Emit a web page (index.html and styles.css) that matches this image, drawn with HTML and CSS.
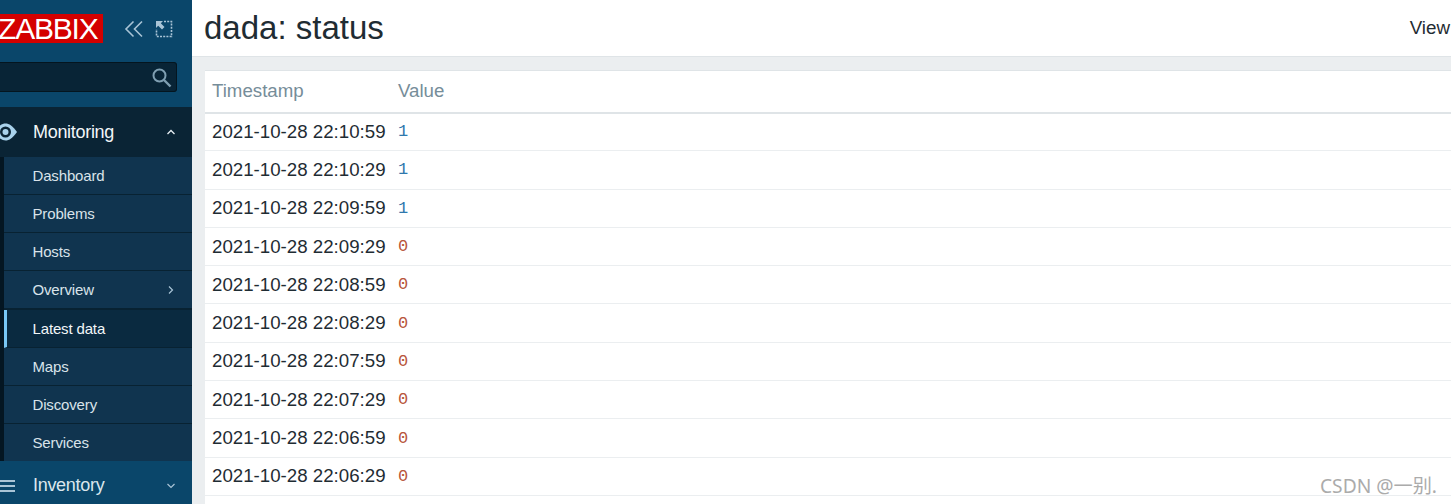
FILE: index.html
```html
<!DOCTYPE html>
<html lang="en">

<head>
    <meta charset="UTF-8">
    <title>dada: status</title>
    <link rel="stylesheet" href="styles.css">
</head>

<body>
    <div class="page">
        <div class="sidebar">
            <div class="brand">
                <div class="logo">ZABBIX</div>
                <svg class="brand-icon" width="20" height="18" viewBox="0 0 20 18">
                    <path d="M9.500 1.500 2 9l7.500 7.500M18 1.500 10.500 9l7.500 7.500" fill="none" stroke="#a9c4d6" stroke-width="1.600"/>
                </svg>
                <svg class="brand-icon expand" width="18" height="18" viewBox="0 0 18 18">
                    <path d="M9 1.500h7.500v15h-15V9" fill="none" stroke="#a9c4d6" stroke-width="1.600" stroke-dasharray="2 1.200"/>
                    <path d="M1 1h7L5.800 3.200 9.500 7 7 9.500 3.200 5.800 1 8z" fill="#a9c4d6"/>
                </svg>
            </div>
            <div class="search">
                <svg width="21" height="21" viewBox="0 0 21 21">
                    <circle cx="8.500" cy="8.500" r="6" fill="none" stroke="#7f9fb2" stroke-width="2"/>
                    <path d="m13 13 6.500 6.500" stroke="#7f9fb2" stroke-width="2.400"/>
                </svg>
            </div>
            <div class="menu-head open">
                <svg class="menu-icon" width="24" height="18" viewBox="0 0 24 18">
                    <path d="M0 9C4 3 8 .5 11.500 .5S19 3 23 9c-4 6-8 8.500-11.500 8.500S4 15 0 9z" fill="#a9d2ec"/>
                    <circle cx="11.500" cy="9" r="5.500" fill="#0a2435"/>
                    <circle cx="11.500" cy="9" r="3" fill="#a9d2ec"/>
                </svg>
                <span class="menu-label">Monitoring</span>
                <svg class="chev" width="10" height="6" viewBox="0 0 10 6"><path d="m1.500 5 3.500-3.500L8.500 5" fill="none" stroke="#e6eef3" stroke-width="1.300"/></svg>
            </div>
            <ul class="submenu">
                <li>Dashboard</li>
                <li>Problems</li>
                <li>Hosts</li>
                <li class="has-sub">Overview <svg width="6" height="10" viewBox="0 0 6 10"><path d="m1 1.500 3.500 3.500L1 8.500" fill="none" stroke="#a9c4d6" stroke-width="1.200"/></svg></li>
                <li class="selected">Latest data</li>
                <li>Maps</li>
                <li>Discovery</li>
                <li>Services</li>
            </ul>
            <div class="menu-head closed">
                <svg class="menu-icon" width="24" height="14" viewBox="0 0 24 14">
                    <path d="M0 2h21M0 7h21M0 12h21" stroke="#a9c4d6" stroke-width="2.200"/>
                </svg>
                <span class="menu-label">Inventory</span>
                <svg class="chev" width="10" height="6" viewBox="0 0 10 6"><path d="m1.500 1 3.500 3.500L8.500 1" fill="none" stroke="#a9c4d6" stroke-width="1.200"/></svg>
            </div>
        </div>

        <div class="main">
            <div class="header">
                <h1>dada: status</h1>
                <span class="view">View</span>
            </div>
            <div class="content">
                <table class="history">
                    <thead>
                        <tr><th class="col-time">Timestamp</th><th>Value</th></tr>
                    </thead>
                    <tbody>
                        <tr><td class="col-time">2021-10-28 22:10:59</td><td class="val up">1</td></tr>
                        <tr><td class="col-time">2021-10-28 22:10:29</td><td class="val up">1</td></tr>
                        <tr><td class="col-time">2021-10-28 22:09:59</td><td class="val up">1</td></tr>
                        <tr><td class="col-time">2021-10-28 22:09:29</td><td class="val down">0</td></tr>
                        <tr><td class="col-time">2021-10-28 22:08:59</td><td class="val down">0</td></tr>
                        <tr><td class="col-time">2021-10-28 22:08:29</td><td class="val down">0</td></tr>
                        <tr><td class="col-time">2021-10-28 22:07:59</td><td class="val down">0</td></tr>
                        <tr><td class="col-time">2021-10-28 22:07:29</td><td class="val down">0</td></tr>
                        <tr><td class="col-time">2021-10-28 22:06:59</td><td class="val down">0</td></tr>
                        <tr><td class="col-time">2021-10-28 22:06:29</td><td class="val down">0</td></tr>
                        <tr><td></td><td></td></tr>
                    </tbody>
                </table>
            </div>
        </div>
    </div>
    <div class="watermark">CSDN @一别.</div>
</body>

</html>
```

FILE: styles.css
```css
html,
body {
    width: 100%;
    height: 100%;
    padding: 0;
    margin: 0;
    overflow: hidden;
}

body {
    position: relative;
    font-family: "Liberation Sans", Arial, sans-serif;
    color: #1f2c33;
}

.page {
    display: flex;
    height: 504px;
    overflow: hidden;
}

.sidebar {
    width: 192px;
    flex: none;
    background: #0a466a;
    overflow: hidden;
}

.brand {
    display: flex;
    align-items: center;
    height: 29px;
    padding-top: 14px;
}

.logo {
    flex: none;
    width: 103px;
    height: 29px;
    margin-right: 21px;
    background: #d40000;
    color: #fff;
    font-size: 30px;
    line-height: 30px;
    letter-spacing: -1.200px;
    text-indent: -2px;
    white-space: nowrap;
}

.brand-icon {
    flex: none;
}

.expand {
    margin-left: 11px;
}

.search {
    display: flex;
    align-items: center;
    justify-content: flex-end;
    box-sizing: border-box;
    width: 177px;
    height: 30px;
    margin-top: 19px;
    padding-right: 4px;
    background: #082436;
    border: 1px solid #04151f;
    border-left: 0;
    border-radius: 0 3px 3px 0;
}

.menu-head {
    display: flex;
    align-items: center;
    color: #dbe6ed;
    background: #0a466a;
}

.menu-head.open {
    height: 50px;
    margin-top: 15px;
    background: #0a2435;
    color: #f2f6f8;
}

.menu-head.closed {
    height: 49px;
}

.menu-icon {
    flex: none;
    margin-left: -6px;
    margin-right: 15px;
}

.menu-label {
    flex: 1;
    font-size: 18px;
    letter-spacing: -0.3px;
}

.chev {
    flex: none;
    margin-right: 16px;
}

.submenu {
    list-style: none;
    margin: 0;
    padding: 0;
    border-left: 4px solid #041622;
    background: #10344f;
}

.submenu li {
    display: flex;
    align-items: center;
    justify-content: space-between;
    box-sizing: border-box;
    height: 38px;
    padding: 0 18px 0 28.500px;
    color: #d9e3ea;
    font-size: 15px;
    letter-spacing: -0.15px;
    border-bottom: 1px solid #082232;
}

.submenu li.has-sub {
    height: 39px;
    border-bottom-width: 2px;
}

.submenu li:last-child {
    height: 37px;
    border-bottom: 0;
}

.submenu li.selected {
    padding-left: 25.500px;
    color: #f2f6f8;
    background: #0a2a40;
    border-left: 3px solid #79c7f5;
}

.main {
    flex: 1;
    min-width: 0;
    display: flex;
    flex-direction: column;
    background: #ebeef0;
}

.header {
    display: flex;
    align-items: center;
    justify-content: space-between;
    flex: none;
    box-sizing: border-box;
    height: 57px;
    padding: 0 1px 0 12px;
    background: #fff;
    border-bottom: 1px solid #dfe4e7;
}

h1 {
    margin: 0;
    font-size: 33px;
    font-weight: normal;
    color: #1f2c33;
}

.view {
    font-size: 18.800px;
}

.content {
    flex: 1;
    padding: 13px 0 0 13px;
}

.history {
    width: 100%;
    border-collapse: collapse;
    background: #fff;
    border-top: 1px solid #dfe4e7;
    font-size: 18.700px;
}

.history th {
    box-sizing: border-box;
    height: 42px;
    padding: 0 7px 1px;
    color: #768d99;
    font-weight: normal;
    text-align: left;
    border-bottom: 2px solid #dfe4e7;
}

.history td {
    height: 38.300px;
    box-sizing: border-box;
    padding: 0 7px;
    border-bottom: 1px solid #ebeef0;
}

.history .col-time {
    box-sizing: border-box;
    width: 186px;
    padding-right: 4px;
    white-space: nowrap;
}

.val {
    font-family: "Liberation Mono", monospace;
    font-size: 17px;
}

.up {
    color: #2f78ad;
}

.down {
    color: #b8553a;
}

.watermark {
    position: absolute;
    right: 14px;
    bottom: 6px;
    font-family: "Noto Sans", "Noto Sans CJK SC", sans-serif;
    font-size: 19.200px;
    line-height: 24px;
    color: #ababab;
}
```
